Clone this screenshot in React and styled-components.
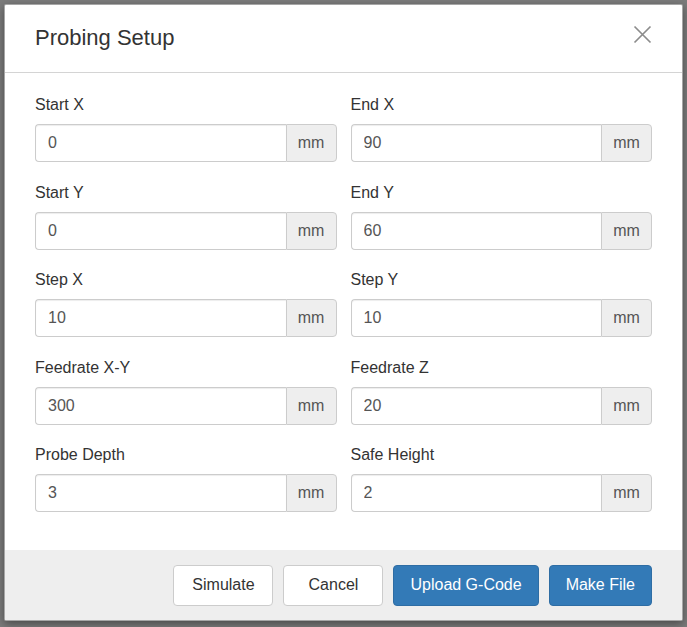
import React from "react";
import styled, { createGlobalStyle } from "styled-components";

const GlobalStyle = createGlobalStyle`
  html, body {
    margin: 0;
    padding: 0;
    background: #7b7b7b;
  }
  body {
    font-family: "Liberation Sans", Arial, Helvetica, sans-serif;
    color: #333;
  }
  * { box-sizing: border-box; }
`;

const Page = styled.div`
  display: flex;
  justify-content: flex-start;
  padding: 4px 4px 6px 4px;
`;

const Modal = styled.div`
  width: 679px;
  background: #fff;
  border: 1px solid rgba(0, 0, 0, 0.35);
  border-radius: 2px;
  box-shadow: 0 3px 9px rgba(0, 0, 0, 0.4);
  overflow: hidden;
  display: flex;
  flex-direction: column;
`;

const Header = styled.div`
  height: 68px;
  padding: 0 30px;
  border-bottom: 1px solid #d4d4d4;
  display: flex;
  align-items: center;
  justify-content: space-between;
`;

const Title = styled.h4`
  margin: 0;
  font-size: 22px;
  line-height: 1.1;
  font-weight: normal;
  color: #333;
`;

const CloseButton = styled.button`
  width: 20px;
  height: 20px;
  padding: 0;
  margin: -8px 0 0 0;
  border: none;
  background: transparent;
  display: flex;
  align-items: center;
  justify-content: center;
  cursor: pointer;
`;

const Body = styled.div`
  padding: 21px 30px 38px;
  display: grid;
  grid-template-columns: 1fr 1fr;
  column-gap: 14px;
  row-gap: 19.5px;
`;

const Field = styled.div`
  display: flex;
  flex-direction: column;
`;

const Label = styled.label`
  font-size: 16px;
  line-height: 22px;
  margin-bottom: 8px;
  color: #333;
`;

const InputGroup = styled.div`
  display: flex;
  height: 38px;
`;

const Input = styled.input`
  flex: 1;
  min-width: 0;
  height: 100%;
  padding: 0 12px;
  font-family: inherit;
  font-size: 16px;
  color: #555;
  background: #fff;
  border: 1px solid #ccc;
  border-right: none;
  border-radius: 4px 0 0 4px;
  box-shadow: inset 0 1px 1px rgba(0, 0, 0, 0.075);
  outline: none;
`;

const Addon = styled.span`
  width: 51px;
  height: 100%;
  display: flex;
  align-items: center;
  justify-content: center;
  font-size: 16px;
  color: #555;
  background: #eee;
  border: 1px solid #ccc;
  border-radius: 0 4px 4px 0;
`;

const Footer = styled.div`
  height: 70px;
  background: #eee;
  padding: 0 30px;
  display: flex;
  align-items: center;
  justify-content: flex-end;
  gap: 10px;
`;

const Button = styled.button`
  height: 41px;
  min-width: 100px;
  padding: 0 16px;
  font-family: inherit;
  font-size: 16px;
  border-radius: 4px;
  cursor: pointer;
  border: 1px solid ${(p) => (p.$primary ? "#2e6da4" : "#ccc")};
  background: ${(p) => (p.$primary ? "#337ab7" : "#fff")};
  color: ${(p) => (p.$primary ? "#fff" : "#333")};
`;

const fields = [
  ["Start X", "0"],
  ["End X", "90"],
  ["Start Y", "0"],
  ["End Y", "60"],
  ["Step X", "10"],
  ["Step Y", "10"],
  ["Feedrate X-Y", "300"],
  ["Feedrate Z", "20"],
  ["Probe Depth", "3"],
  ["Safe Height", "2"],
];

export default function App() {
  return (
    <>
      <GlobalStyle />
      <Page>
        <Modal>
          <Header>
            <Title>Probing Setup</Title>
            <CloseButton aria-label="Close">
              <svg width="19" height="19" viewBox="0 0 19 19">
                <path
                  d="M1.5 1.5 L17.5 17.5 M17.5 1.5 L1.5 17.5"
                  stroke="#8c8c8c"
                  strokeWidth="1.7"
                  fill="none"
                />
              </svg>
            </CloseButton>
          </Header>
          <Body>
            {fields.map(([label, value]) => (
              <Field key={label}>
                <Label>{label}</Label>
                <InputGroup>
                  <Input defaultValue={value} />
                  <Addon>mm</Addon>
                </InputGroup>
              </Field>
            ))}
          </Body>
          <Footer>
            <Button>Simulate</Button>
            <Button>Cancel</Button>
            <Button $primary>Upload G-Code</Button>
            <Button $primary>Make File</Button>
          </Footer>
        </Modal>
      </Page>
    </>
  );
}
